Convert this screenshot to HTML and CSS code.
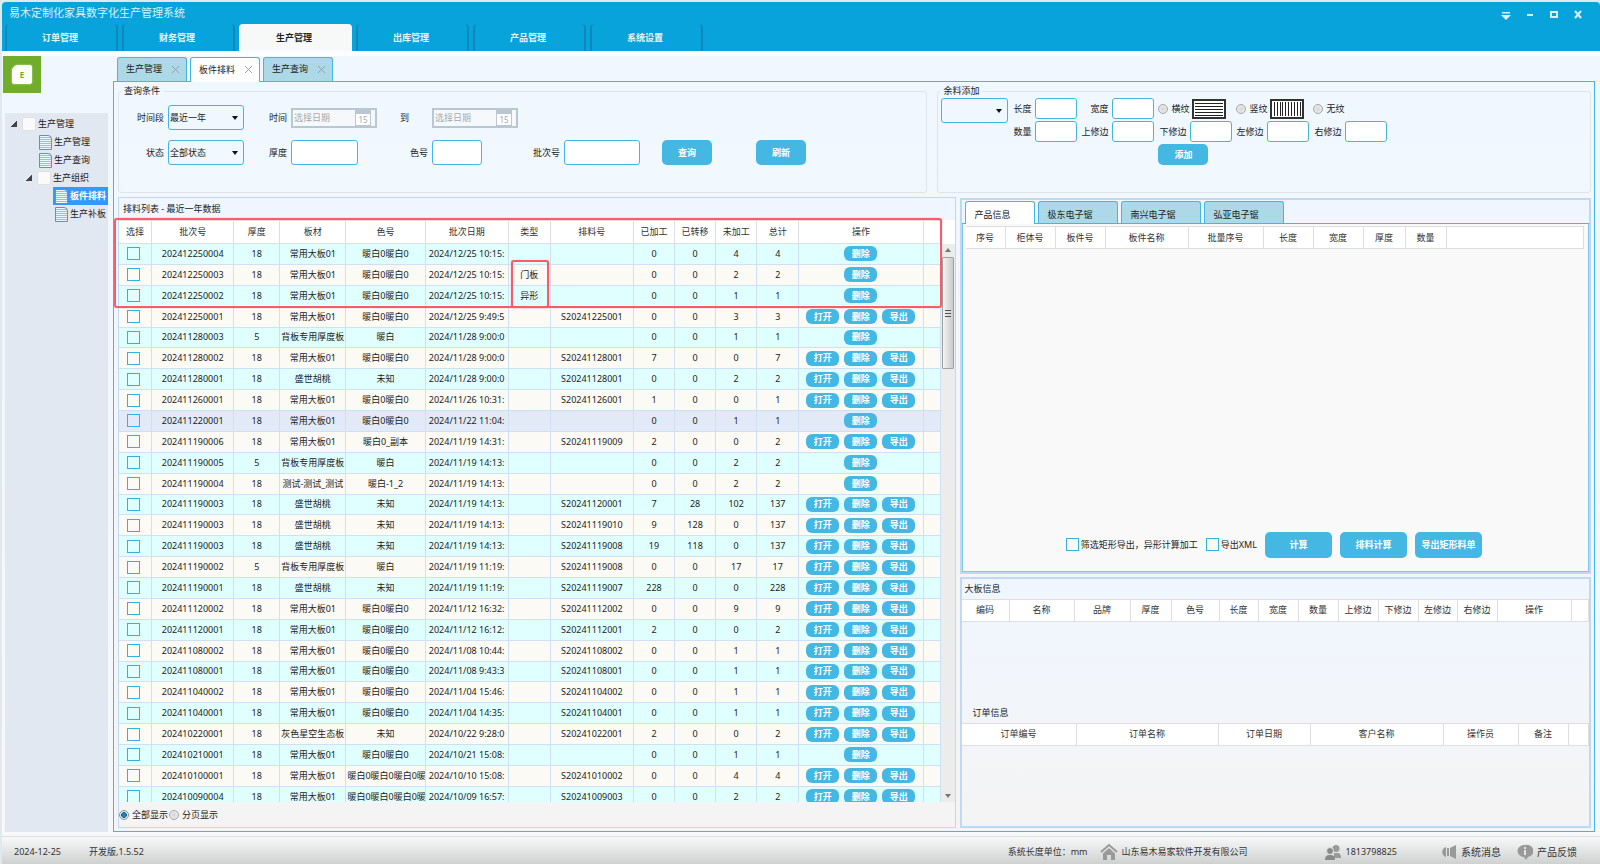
FILE: index.html
```html
<!DOCTYPE html>
<html lang="zh-CN">
<head>
    <meta charset="UTF-8">
    <meta name="viewport" content="width=device-width, initial-scale=1.0">
    <title>易木定制化家具数字化生产管理系统</title>
    <link rel="stylesheet" href="styles.css">
</head>
<body>

<!-- 顶部标题栏 -->
<header class="header">
    <div class="title-bar">
        <h1 class="app-title">易木定制化家具数字化生产管理系统</h1>
        <div class="window-buttons">
            <button type="button" aria-label="菜单"><svg viewBox="0 0 12 12"><path d="M2 3h8v1.500H2zM1 6h10l-5 5z" fill="#d8f1fb"/></svg></button>
            <button type="button" aria-label="最小化"><svg viewBox="0 0 12 12"><path d="M3 6h6" stroke="#d8f1fb" stroke-width="2"/></svg></button>
            <button type="button" aria-label="最大化"><svg viewBox="0 0 12 12"><path d="M3 3h6v5H3z" fill="none" stroke="#d8f1fb" stroke-width="2"/></svg></button>
            <button type="button" aria-label="关闭"><svg viewBox="0 0 12 12"><path d="M3 2l6 7M9 2l-6 7" stroke="#d8f1fb" stroke-width="2"/></svg></button>
        </div>
    </div>
    <nav class="main-nav">
        <a href="#">订单管理</a>
        <a href="#">财务管理</a>
        <a href="#" class="active">生产管理</a>
        <a href="#">出库管理</a>
        <a href="#">产品管理</a>
        <a href="#">系统设置</a>
    </nav>
</header>

<div class="body">
    <!-- 左侧菜单 -->
    <aside class="sidebar">
        <div class="logo"><span>E</span></div>
        <ul class="tree">
            <li class="folder"><a href="#">生产管理</a></li>
            <li class="doc level2"><a href="#">生产管理</a></li>
            <li class="doc level2"><a href="#">生产查询</a></li>
            <li class="folder level-sub"><a href="#">生产组织</a></li>
            <li class="doc level3 selected"><a href="#">板件排料</a></li>
            <li class="doc level3"><a href="#">生产补板</a></li>
        </ul>
    </aside>

    <main class="main">
        <div class="page-tabs">
            <div class="page-tab"><a href="#">生产管理</a><button type="button" class="close" aria-label="关闭生产管理"></button></div>
            <div class="page-tab active"><a href="#">板件排料</a><button type="button" class="close" aria-label="关闭板件排料"></button></div>
            <div class="page-tab"><a href="#">生产查询</a><button type="button" class="close" aria-label="关闭生产查询"></button></div>
        </div>

        <div class="content">
            <!-- 查询区 -->
            <div class="filters">
                <fieldset class="group query">
                    <legend>查询条件</legend>
                    <div class="query-grid">
                        <label for="period">时间段</label>
                        <span class="select"><select id="period"><option>最近一年</option></select></span>
                        <label for="from">时间</label>
                        <span class="date"><input id="from" type="text" placeholder="选择日期" disabled><i>15</i></span>
                        <label for="to" class="center">到</label>
                        <span class="date"><input id="to" type="text" placeholder="选择日期" disabled><i>15</i></span>

                        <label for="state" class="new-row">状态</label>
                        <span class="select"><select id="state"><option>全部状态</option></select></span>
                        <label for="thick">厚度</label>
                        <input id="thick" class="box w67" type="text">
                        <label for="color">色号</label>
                        <input id="color" class="box w50" type="text">
                        <label for="batch">批次号</label>
                        <input id="batch" class="box" type="text">
                        <button type="button" class="btn">查询</button>
                        <button type="button" class="btn">刷新</button>
                    </div>
                </fieldset>

                <fieldset class="group remnant">
                    <legend>余料添加</legend>
                    <div class="remnant-grid">
                        <span class="select"><select id="board" aria-label="板材"><option></option></select></span>
                        <label for="len">长度</label><input id="len" class="box" type="text">
                        <label for="wid">宽度</label><input id="wid" class="box" type="text">
                        <label class="grain"><input type="radio" name="grain">横纹
                            <svg viewBox="0 0 34 20"><path d="M1 1h32v18H1z" fill="#fff" stroke="#33332c" stroke-width="2"/><path d="M3 4.500h28M3 7.500h28M3 10.500h28M3 13.500h28M3 16.500h28" stroke="#222"/></svg>
                        </label>
                        <label class="grain"><input type="radio" name="grain">竖纹
                            <svg viewBox="0 0 34 20"><path d="M1 1h32v18H1z" fill="#fff" stroke="#33332c" stroke-width="2"/><path d="M4.500 3v14M7.500 3v14M10.500 3v14M12.500 3v14M15.500 3v14M18.500 3v14M21.500 3v14M24.500 3v14M27.500 3v14M30.500 3v14" stroke="#222"/></svg>
                        </label>
                        <label class="grain"><input type="radio" name="grain">无纹</label>

                        <label for="qty" class="second">数量</label><input id="qty" class="box" type="text">
                        <label for="et">上修边</label><input id="et" class="box" type="text">
                        <label for="eb">下修边</label><input id="eb" class="box" type="text">
                        <label for="el">左修边</label><input id="el" class="box" type="text">
                        <label for="er">右修边</label><input id="er" class="box" type="text">
                        <button type="button" class="btn add">添加</button>
                    </div>
                </fieldset>
            </div>

            <div class="panels">
                <!-- 排料列表 -->
                <section class="panel list-panel">
                    <h2>排料列表 - 最近一年数据</h2>
                    <div class="list-area">
                        <div class="list-scroll">
                            <table class="grid list">
                                <colgroup>
                                    <col class="c33"><col class="c82"><col class="c46"><col class="c66"><col class="c79"><col class="c83"><col class="c42"><col class="c83"><col class="c41"><col class="c41"><col class="c41"><col class="c42"><col class="c124"><col class="c17">
                                </colgroup>
                                <thead>
                                    <tr><th>选择</th><th>批次号</th><th>厚度</th><th>板材</th><th>色号</th><th>批次日期</th><th>类型</th><th>排料号</th><th>已加工</th><th>已转移</th><th>未加工</th><th>总计</th><th>操作</th><th></th></tr>
                                </thead>
                                <tbody id="rows"></tbody>
                            </table>
                        </div>
                        <div class="scrollbar"><div class="track"><div class="thumb"></div></div></div>
                        <div class="mark mark-rows"></div>
                        <div class="mark mark-type"></div>
                    </div>
                    <div class="paging">
                        <label><input type="radio" name="paging" checked>全部显示</label>
                        <label><input type="radio" name="paging">分页显示</label>
                    </div>
                </section>

                <div class="right">
                    <section class="panel product-panel">
                        <div class="sub-tabs">
                            <a href="#" class="active">产品信息</a>
                            <a href="#">极东电子锯</a>
                            <a href="#">南兴电子锯</a>
                            <a href="#">弘亚电子锯</a>
                        </div>
                        <div class="product-body">
                            <table class="grid">
                                <colgroup><col class="c40"><col class="c50"><col class="c50"><col class="c83"><col class="c75"><col class="c50"><col class="c50"><col class="c42"><col class="c41"><col></colgroup>
                                <thead>
                                    <tr><th>序号</th><th>柜体号</th><th>板件号</th><th>板件名称</th><th>批量序号</th><th>长度</th><th>宽度</th><th>厚度</th><th>数量</th><th></th></tr>
                                </thead>
                            </table>
                            <div class="actions">
                                <label><input type="checkbox">筛选矩形导出，异形计算加工</label>
                                <label><input type="checkbox">导出XML</label>
                                <button type="button" class="btn">计算</button>
                                <button type="button" class="btn">排料计算</button>
                                <button type="button" class="btn">导出矩形料单</button>
                            </div>
                        </div>
                    </section>

                    <section class="panel info-panel">
                        <div class="info-half">
                            <h2>大板信息</h2>
                            <table class="grid">
                                <colgroup><col class="c48"><col class="c65"><col class="c56"><col class="c41"><col class="c48"><col class="c39"><col class="c40"><col class="c40"><col class="c40"><col class="c40"><col class="c39"><col class="c40"><col class="c74"><col></colgroup>
                                <thead>
                                    <tr><th>编码</th><th>名称</th><th>品牌</th><th>厚度</th><th>色号</th><th>长度</th><th>宽度</th><th>数量</th><th>上修边</th><th>下修边</th><th>左修边</th><th>右修边</th><th>操作</th><th></th></tr>
                                </thead>
                            </table>
                        </div>
                        <div class="info-half">
                            <h2 class="indent">订单信息</h2>
                            <table class="grid">
                                <colgroup><col class="c115"><col class="c142"><col class="c92"><col class="c133"><col class="c75"><col class="c50"><col></colgroup>
                                <thead>
                                    <tr><th>订单编号</th><th>订单名称</th><th>订单日期</th><th>客户名称</th><th>操作员</th><th>备注</th><th></th></tr>
                                </thead>
                            </table>
                        </div>
                    </section>
                </div>
            </div>
        </div>
    </main>
</div>

<!-- 状态栏 -->
<footer class="status-bar">
    <span class="today">2024-12-25</span>
    <span class="version">开发版,1.5.52</span>
    <span class="unit">系统长度单位：mm</span>
    <span class="company">
        <svg viewBox="0 0 18 18"><path d="M1 9l8-7 8 7" fill="none" stroke="#999" stroke-width="2"/><path d="M3 10.500L9 5l6 5.500V17h-4v-5H7v5H3z" fill="#999"/></svg>
        山东易木易家软件开发有限公司
    </span>
    <span class="user">
        <svg viewBox="0 0 18 16"><circle cx="12" cy="4.500" r="3.500" fill="#999"/><path d="M10 14V9h4c2 0 3 2 3 5z" fill="#999"/><circle cx="6" cy="7" r="3.500" fill="#888" stroke="#e5e5e5"/><path d="M1 16c0-4 2-5 5-5s5 1 5 5z" fill="#888"/></svg>
        1813798825
    </span>
    <a href="#" class="message">
        <svg viewBox="0 0 16 16"><path d="M5 3v10C0 12 0 4 5 3zM6 4h2v8H6zM9 4l6-3v14l-6-3z" fill="#999"/></svg>
        系统消息
    </a>
    <a href="#" class="feedback">
        <svg viewBox="0 0 16 16"><path d="M8 1a7 6 0 0 1 3 12l-2 3-2-3A7 6 0 0 1 8 1z" fill="#999"/><path d="M8 3v2M8 6v5" stroke="#e5e5e5" stroke-width="2"/></svg>
        产品反馈
    </a>
</footer>

<script>
    // 批次号, 厚度, 板材, 色号, 批次日期, 类型, 排料号, 已加工, 已转移, 未加工, 总计
    const data = [
        ['202412250004', 18, '常用大板01', '暖白0暖白0', '2024/12/25 10:15:', '', '', 0, 0, 4, 4],
        ['202412250003', 18, '常用大板01', '暖白0暖白0', '2024/12/25 10:15:', '门板', '', 0, 0, 2, 2],
        ['202412250002', 18, '常用大板01', '暖白0暖白0', '2024/12/25 10:15:', '异形', '', 0, 0, 1, 1],
        ['202412250001', 18, '常用大板01', '暖白0暖白0', '2024/12/25 9:49:5', '', 'S20241225001', 0, 0, 3, 3],
        ['202411280003', 5, '背板专用厚度板', '暖白', '2024/11/28 9:00:0', '', '', 0, 0, 1, 1],
        ['202411280002', 18, '常用大板01', '暖白0暖白0', '2024/11/28 9:00:0', '', 'S20241128001', 7, 0, 0, 7],
        ['202411280001', 18, '盛世胡桃', '未知', '2024/11/28 9:00:0', '', 'S20241128001', 0, 0, 2, 2],
        ['202411260001', 18, '常用大板01', '暖白0暖白0', '2024/11/26 10:31:', '', 'S20241126001', 1, 0, 0, 1],
        ['202411220001', 18, '常用大板01', '暖白0暖白0', '2024/11/22 11:04:', '', '', 0, 0, 1, 1],
        ['202411190006', 18, '常用大板01', '暖白0_副本', '2024/11/19 14:31:', '', 'S20241119009', 2, 0, 0, 2],
        ['202411190005', 5, '背板专用厚度板', '暖白', '2024/11/19 14:13:', '', '', 0, 0, 2, 2],
        ['202411190004', 18, '测试-测试_测试', '暖白-1_2', '2024/11/19 14:13:', '', '', 0, 0, 2, 2],
        ['202411190003', 18, '盛世胡桃', '未知', '2024/11/19 14:13:', '', 'S20241120001', 7, 28, 102, 137],
        ['202411190003', 18, '盛世胡桃', '未知', '2024/11/19 14:13:', '', 'S20241119010', 9, 128, 0, 137],
        ['202411190003', 18, '盛世胡桃', '未知', '2024/11/19 14:13:', '', 'S20241119008', 19, 118, 0, 137],
        ['202411190002', 5, '背板专用厚度板', '暖白', '2024/11/19 11:19:', '', 'S20241119008', 0, 0, 17, 17],
        ['202411190001', 18, '盛世胡桃', '未知', '2024/11/19 11:19:', '', 'S20241119007', 228, 0, 0, 228],
        ['202411120002', 18, '常用大板01', '暖白0暖白0', '2024/11/12 16:32:', '', 'S20241112002', 0, 0, 9, 9],
        ['202411120001', 18, '常用大板01', '暖白0暖白0', '2024/11/12 16:12:', '', 'S20241112001', 2, 0, 0, 2],
        ['202411080002', 18, '常用大板01', '暖白0暖白0', '2024/11/08 10:44:', '', 'S20241108002', 0, 0, 1, 1],
        ['202411080001', 18, '常用大板01', '暖白0暖白0', '2024/11/08 9:43:3', '', 'S20241108001', 0, 0, 1, 1],
        ['202411040002', 18, '常用大板01', '暖白0暖白0', '2024/11/04 15:46:', '', 'S20241104002', 0, 0, 1, 1],
        ['202411040001', 18, '常用大板01', '暖白0暖白0', '2024/11/04 14:35:', '', 'S20241104001', 0, 0, 1, 1],
        ['202410220001', 18, '灰色星空生态板', '未知', '2024/10/22 9:28:0', '', 'S20241022001', 2, 0, 0, 2],
        ['202410210001', 18, '常用大板01', '暖白0暖白0', '2024/10/21 15:08:', '', '', 0, 0, 1, 1],
        ['202410100001', 18, '常用大板01', '暖白0暖白0暖白0暖', '2024/10/10 15:08:', '', 'S20241010002', 0, 0, 4, 4],
        ['202410090004', 18, '常用大板01', '暖白0暖白0暖白0暖', '2024/10/09 16:57:', '', 'S20241009003', 0, 0, 2, 2]
    ];

    const button = text => `<button type="button" class="row-btn">${text}</button>`;

    document.getElementById('rows').innerHTML = data.map((row, index) => {
        // 已有排料号的批次才能打开和导出
        const buttons = row[6] ? button('打开') + button('删除') + button('导出') : button('删除');
        return `<tr class="${index === 8 ? 'current' : ''}">
            <td><input type="checkbox" aria-label="选择 ${row[0]}"></td>
            ${row.map(value => `<td>${value}</td>`).join('')}
            <td><div class="row-btns">${buttons}</div></td><td></td>
        </tr>`;
    }).join('');
</script>

</body>
</html>
```

FILE: styles.css
```css
* {
    margin: 0;
    padding: 0;
    box-sizing: border-box;
}

html, body {
    height: 100%;
}

body {
    display: flex;
    flex-direction: column;
    overflow: hidden;
    padding-top: 2px;
    padding-left: 2px;
    background: #dfe9ee;
    color: #222;
    font-family: "Noto Sans", "Noto Sans CJK SC", sans-serif;
    font-size: 9px;
    line-height: 14px;
}

input, select, button {
    font: inherit;
    color: inherit;
}

button {
    border: 0;
    background: none;
    cursor: pointer;
}

a {
    color: inherit;
    text-decoration: none;
}

/* 顶部 */
.header {
    height: 49px;
    display: flex;
    flex-direction: column;
    justify-content: space-between;
    background: #09a3dc;
    border-radius: 4px 4px 0 0;
}

.title-bar {
    display: flex;
    justify-content: space-between;
    padding: 3px 16px 0 7px;
    height: 22px;
}

.app-title {
    font-size: 11px;
    font-weight: normal;
    line-height: 16px;
    color: #d8f1fb;
}

.window-buttons {
    display: flex;
    gap: 12px;
}

.window-buttons svg {
    display: block;
    width: 12px;
    height: 12px;
}

.main-nav {
    display: flex;
    gap: 4px;
    padding-left: 3px;
}

.main-nav a {
    width: 113px;
    height: 27px;
    padding-right: 3px;
    line-height: 28px;
    text-align: center;
    font-weight: bold;
    color: #e8f6fc;
    border: 2px solid #0c88bb;
    border-width: 0 2px;
    border-radius: 4px 4px 0 0;
}

.main-nav a.active {
    background: #f7f8f8;
    border-color: #f7f8f8;
    color: #222;
}

/* 主体 */
.body {
    flex: 1;
    min-height: 0;
    display: flex;
    gap: 5px;
    padding-right: 5px;
    border-top: 5px solid #fcfdfe;
    background: linear-gradient(#f0f7ff, #f6f8fa);
}

.sidebar {
    width: 106px;
    display: flex;
    flex-direction: column;
    gap: 20px;
    padding: 0 0 4px 1px;
}

.logo {
    width: 38px;
    height: 37px;
    display: grid;
    place-items: center;
    background: #6fad2b;
}

.logo span {
    width: 20px;
    height: 19px;
    border: 1px solid #fff;
    border-radius: 6px 2px 2px 2px;
    background: #fbfdf8;
    box-shadow: 0 0 2px #d5e8bb;
    color: #6fad2b;
    font-size: 8px;
    font-weight: bold;
    line-height: 18px;
    text-align: center;
}

.tree {
    flex: 1;
    margin-left: 2px;
    padding-top: 2px;
    list-style: none;
    background: #e1e8f2;
}

.tree li {
    display: flex;
    align-items: center;
    gap: 2px;
    height: 18px;
    padding-left: 6px;
    white-space: nowrap;
}

.tree .folder::before {
    content: "";
    width: 6px;
    height: 6px;
    margin-right: 3px;
    background: linear-gradient(135deg, transparent 50%, #444 50%);
}

.tree .folder a::before {
    content: "";
    display: inline-block;
    width: 12px;
    height: 12px;
    margin-right: 2px;
    vertical-align: middle;
    border: 1px solid #e3e1dc;
    border-radius: 2px;
    background: #fafafa;
}

.tree .level-sub {
    padding-left: 21px;
}

.tree .level2 {
    padding-left: 34px;
}

.tree .level3 {
    margin-left: 48px;
    padding-left: 2px;
}

.tree .doc::before {
    content: "";
    flex: none;
    width: 11px;
    height: 13px;
    border: 1px solid #6d8fb5;
    border-top-right-radius: 4px;
    background: repeating-linear-gradient(#eef5fc 0 1px, #9dbddd 1px 2px);
}

.tree .selected {
    background: #3399ff;
    color: #fff;
    font-weight: bold;
}

.main {
    flex: 1;
    min-width: 0;
    display: flex;
    flex-direction: column;
    padding: 1px 0 4px;
}

.page-tabs {
    display: flex;
    gap: 3px;
    padding-left: 4px;
}

.page-tab {
    width: 70px;
    height: 24px;
    display: flex;
    align-items: center;
    justify-content: space-between;
    padding: 0 7px 1px 8px;
    border: 1px solid #45b5e3;
    border-bottom: 0;
    border-radius: 3px 3px 0 0;
    background: #add8e6;
}

.page-tab.active {
    height: 25px;
    margin-bottom: -1px;
    background: #fff;
    z-index: 1;
}

.close {
    width: 7px;
    height: 7px;
    background:
        linear-gradient(45deg, transparent 45%, #8fa3ad 45% 55%, transparent 55%),
        linear-gradient(-45deg, transparent 45%, #8fa3ad 45% 55%, transparent 55%);
}

.content {
    flex: 1;
    min-height: 0;
    display: flex;
    flex-direction: column;
    gap: 4px;
    padding: 2px 3px 3px 4px;
    border: 1px solid #45b5e3;
    background: linear-gradient(#f0f8ff, #f4f4f4);
}

/* 查询 */
.filters {
    display: grid;
    grid-template-columns: 810fr 654fr;
    gap: 10px;
}

.group {
    height: 109px;
    min-width: 0;
    border: 1px solid #dde4ea;
    border-radius: 3px;
}

.group legend {
    margin-left: 2px;
    padding: 0 3px;
}

.query-grid {
    display: grid;
    grid-template-columns: 45px 76px 39px 86px 47px 86px 38px 76px 68px 90px;
    grid-auto-rows: 25px;
    gap: 10px 4px;
    padding-top: 7px;
    align-items: center;
}

.query-grid label, .remnant-grid label {
    text-align: right;
    white-space: nowrap;
}

.query-grid label.center {
    text-align: center;
}

.query-grid .new-row {
    grid-column: 1;
}

.query-grid .btn {
    justify-self: end;
}

.select {
    display: block;
    height: 25px;
    border: 1px solid #45b5e3;
    border-radius: 3px;
    position: relative;
}

.select select {
    width: 100%;
    height: 100%;
    padding-left: 1px;
    appearance: none;
    border: 0;
    background: none;
}

.select::after {
    content: "";
    position: absolute;
    right: 5px;
    top: 10px;
    border: 3px solid transparent;
    border-top: 4px solid #111;
    border-bottom: 0;
    pointer-events: none;
}

.box {
    width: 100%;
    height: 100%;
    padding: 0 3px;
    border: 1px solid #45b5e3;
    border-radius: 3px;
    background: #fff;
}

.w67 {
    width: 67px;
}

.w50 {
    width: 50px;
}

.date {
    display: flex;
    align-items: center;
    height: 20px;
    padding-right: 4px;
    border: 2px solid #b9c7d2;
    background: #f6f9fb;
}

.date input {
    flex: 1;
    min-width: 0;
    padding-left: 1px;
    border: 0;
    background: none;
}

.date input::placeholder {
    color: #a5a9ad;
}

.date i {
    width: 16px;
    height: 16px;
    border: 1px solid #b9c7d2;
    border-top-width: 4px;
    background: #fff;
    color: #a0a7ad;
    font-size: 8px;
    font-style: normal;
    line-height: 11px;
    text-align: center;
}

.btn {
    width: 50px;
    height: 25px;
    border-radius: 5px;
    background: #45b7e3;
    color: #fff;
    font-weight: bold;
}

.remnant-grid {
    display: grid;
    grid-template-columns: 67px 19px 42px 27px 42px 28px 42px 27px 42px 28px 42px;
    grid-auto-rows: 21px;
    gap: 2px 4px;
    padding-left: 3px;
    align-items: center;
}

.remnant-grid .select {
    align-self: start;
}

.remnant-grid .second {
    grid-column: 2;
}

.remnant-grid .grain {
    grid-column: span 2;
    display: flex;
    align-items: center;
    gap: 3px;
}

.grain svg {
    width: 34px;
    height: 20px;
}

.remnant-grid .add {
    grid-column: 6 / span 2;
    height: 21px;
}

input[type="radio"] {
    appearance: none;
    width: 10px;
    height: 10px;
    border: 1px solid #a5a5a5;
    border-radius: 50%;
    background: radial-gradient(#d5d5d5, #f4f4f4);
}

input[type="radio"]:checked {
    border-color: #8496a3;
    background: radial-gradient(#1787bb 0 30%, #175b7c 45%, #e8eef2 55%);
}

input[type="checkbox"] {
    appearance: none;
    width: 13px;
    height: 13px;
    border: 1px solid #35b1e1;
    vertical-align: middle;
}

/* 面板 */
.panels {
    flex: 1;
    min-height: 0;
    display: grid;
    grid-template-columns: 837fr 631fr;
    gap: 4px;
}

.panel {
    display: flex;
    flex-direction: column;
    min-width: 0;
    min-height: 0;
    border: 1px solid #c2d8f1;
    background: linear-gradient(#f0f6ff, #f4f4f4);
}

.panel h2 {
    padding-left: 4px;
    font-size: 9px;
    font-weight: normal;
    line-height: 22px;
}

.list-area {
    flex: 1;
    min-height: 0;
    display: flex;
    position: relative;
    background: linear-gradient(#fff 24px, transparent 24px);
}

.list-scroll {
    flex: 1;
    min-width: 0;
    overflow: hidden;
}

.grid {
    width: 100%;
    table-layout: fixed;
    border-collapse: separate;
    border-spacing: 0;
}

/* 最后一行只露出一部分 */
.grid.list {
    height: calc(100% + 6px);
}

.grid th {
    height: 23px;
    border: 1px solid #dedede;
    border-width: 1px 1px 1px 0;
    background: #fff;
    font-weight: normal;
    color: #333;
    white-space: nowrap;
}

.grid.list th {
    height: 24px;
}

.grid td {
    border: 1px solid #d0e0f3;
    border-width: 0 1px 1px 0;
    padding: 0 1px;
    text-align: center;
    white-space: nowrap;
    overflow: hidden;
}

.list td:first-child {
    padding-right: 4px;
}

.list tbody tr {
    background: #e0ffff;
    line-height: 12px;
}

.list tbody tr:nth-child(even) {
    background: #fcfaf4;
}

.list tbody tr.current {
    background: #e1eaf6;
}

.row-btns {
    display: flex;
    justify-content: center;
    gap: 5px;
}

.row-btn {
    width: 33px;
    height: 15px;
    border-radius: 6px;
    background: #45b7e3;
    color: #fff;
    font-weight: bold;
    line-height: 14px;
}

.c17 { width: 17px; }
.c33 { width: 33px; }
.c39 { width: 39px; }
.c40 { width: 40px; }
.c41 { width: 41px; }
.c42 { width: 42px; }
.c46 { width: 46px; }
.c48 { width: 48px; }
.c50 { width: 50px; }
.c56 { width: 56px; }
.c65 { width: 65px; }
.c66 { width: 66px; }
.c74 { width: 74px; }
.c75 { width: 75px; }
.c79 { width: 79px; }
.c82 { width: 82px; }
.c83 { width: 83px; }
.c92 { width: 92px; }
.c115 { width: 115px; }
.c124 { width: 124px; }
.c133 { width: 133px; }
.c142 { width: 142px; }

.scrollbar {
    width: 14px;
    padding-top: 24px;
}

.track {
    height: 100%;
    display: flex;
    flex-direction: column;
    justify-content: space-between;
    align-items: center;
    padding: 4px 1px;
    background: #ececec;
}

.track::before, .track::after {
    content: "";
    border: 3px solid transparent;
    border-top: 0;
    border-bottom: 4px solid #777;
}

.track::after {
    border-top: 4px solid #777;
    border-bottom: 0;
}

.thumb {
    width: 12px;
    height: 112px;
    margin-top: 5px;
    margin-bottom: auto;
    border: 1px solid #a0a0a0;
    border-radius: 1px;
    background:
        repeating-linear-gradient(#555 0 1px, transparent 1px 3px) center / 6px 7px no-repeat,
        linear-gradient(to right, #f4f4f4, #c9cacc);
}

/* 红色标注框 */
.mark {
    position: absolute;
    border: 2px solid #fb5a68;
    border-radius: 3px;
    box-shadow: 0 0 1px #fb5a68;
    pointer-events: none;
}

.mark-rows {
    left: -5px;
    right: 13px;
    top: -2px;
    height: 90px;
}

.mark-type {
    left: 392px;
    top: 40px;
    width: 38px;
    height: 48px;
}

.paging {
    display: flex;
    gap: 1px;
    height: 25px;
    background: #f4f4f4;
}

.paging label, .actions label {
    display: flex;
    align-items: center;
    gap: 3px;
}

/* 右侧 */
.right {
    display: flex;
    flex-direction: column;
    gap: 3px;
    min-width: 0;
    padding-top: 1px;
}

.product-panel {
    flex: 378;
    border-width: 2px;
}

.sub-tabs {
    display: flex;
    gap: 3px;
    padding: 1px 0 0 3px;
    border-bottom: 1px solid #45b5e3;
}

.sub-tabs a {
    width: 80px;
    height: 22px;
    padding-left: 9px;
    border: 1px solid #45b5e3;
    border-bottom: 0;
    border-radius: 3px 3px 0 0;
    background: #add8e6;
    line-height: 26px;
}

.sub-tabs a.active {
    width: 70px;
    height: 23px;
    margin-bottom: -1px;
    background: #fff;
}

.product-body {
    flex: 1;
    display: flex;
    flex-direction: column;
    justify-content: space-between;
    padding: 2px 4px 13px 3px;
    border: 1px solid #7cc8ea;
    border-top: 0;
    background: #f9f9f9;
}

.actions {
    display: flex;
    align-items: center;
    justify-content: flex-end;
    gap: 8px;
    padding-right: 102px;
}

.actions label {
    gap: 2px;
}

.actions .btn {
    width: 67px;
    height: 26px;
    white-space: nowrap;
}

.info-panel {
    flex: 251;
    border-width: 2px;
}

.info-half {
    flex: 1;
}

.info-panel h2 {
    padding-left: 3px;
    line-height: 20px;
}

.info-panel .indent {
    padding-left: 11px;
}

/* 状态栏 */
.status-bar {
    height: 28px;
    display: flex;
    align-items: center;
    padding: 2px 23px 0 12px;
    border-top: 1px solid #e0e0e0;
    background: linear-gradient(#f8f8f8, #cfd1d1);
    color: #333;
    white-space: nowrap;
}

.status-bar svg {
    width: 18px;
    height: 18px;
}

.status-bar .company, .status-bar .user, .status-bar a {
    display: flex;
    align-items: center;
    gap: 4px;
}

.status-bar a svg {
    width: 16px;
    height: 16px;
}

.version {
    margin-left: 28px;
}

.unit {
    margin-left: auto;
}

.company {
    margin-left: 12px;
}

.user {
    margin-left: 76px;
}

.message {
    margin-left: 44px;
    font-size: 10px;
}

.feedback {
    margin-left: 16px;
    font-size: 10px;
}
```
